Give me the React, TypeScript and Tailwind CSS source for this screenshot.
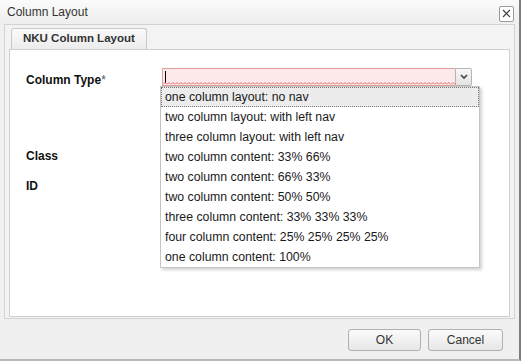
import React from "react";

const options = [
  "one column layout: no nav",
  "two column layout: with left nav",
  "three column layout: with left nav",
  "two column content: 33% 66%",
  "two column content: 66% 33%",
  "two column content: 50% 50%",
  "three column content: 33% 33% 33%",
  "four column content: 25% 25% 25% 25%",
  "one column content: 100%",
];

const font = { fontFamily: "Tahoma, 'Liberation Sans', Arial, sans-serif" };

export default function App() {
  return (
    <div
      className="w-[521px] h-[361px] flex flex-col bg-[#f0f0f0] border-r-[2px] border-b-[2px] border-r-[#7d7d7d] border-b-[#b9b9b9] text-[#222] overflow-hidden"
      style={font}
    >
      {/* title bar */}
      <div className="h-[23px] shrink-0 flex items-center justify-between pl-[7px] pr-[5px] bg-gradient-to-b from-[#fbfbfb] to-[#eeeeee]">
        <span className="text-[12px] text-[#333]">Column Layout</span>
        <button className="w-[15px] h-[16px] mt-[4px] flex items-center justify-center border border-[#9a9a9a] rounded-[2px] bg-white">
          <svg width="9" height="9" viewBox="0 0 9 9">
            <path d="M1 1 L8 8 M8 1 L1 8" stroke="#444" strokeWidth="1.2" />
          </svg>
        </button>
      </div>

      {/* panel */}
      <div className="mx-[4px] mt-[1px] border border-[#d3d3d3] bg-[#f3f3f3] px-[4px] pb-[1px] h-[295px] flex flex-col">
        <div className="flex pl-[2px] pt-[3px]">
          <div className="h-[21px] px-[11px] flex items-center border border-b-0 border-[#c9c9c9] rounded-t-[3px] bg-gradient-to-b from-[#fafafa] to-[#ececec] text-[11.5px] font-bold text-[#333]">
            NKU Column Layout
          </div>
        </div>
        <div className="relative flex-1 bg-white border border-[#cfcfcf] pt-[18px] pl-[16px]">
          <div className="flex flex-col text-[12px] font-bold text-[#111]">
            <div className="flex">
              <div className="w-[136px] pt-[3px]">
                Column Type<span className="font-normal text-[#555]">*</span>
              </div>
              <div className="flex h-[18px]">
                <div className="relative w-[293px] h-[18px] bg-[#fde9e9] border border-[#e0a0a0] border-r-0">
                  <div className="absolute left-[2px] top-[2px] w-px h-[12px] bg-black" />
                  <svg className="absolute left-0 bottom-0" width="293" height="3">
                    <defs>
                      <pattern id="wave" width="4" height="3" patternUnits="userSpaceOnUse">
                        <path d="M0 2.5 L2 0.5 L4 2.5" stroke="#d05050" strokeWidth="0.8" fill="none" />
                      </pattern>
                    </defs>
                    <rect width="293" height="3" fill="url(#wave)" />
                  </svg>
                </div>
                <div className="w-[17px] h-[18px] border border-[#b5b5b5] rounded-r-[2px] bg-gradient-to-b from-[#f8f8f8] to-[#e3e3e3] flex items-center justify-center">
                  <svg width="8" height="6" viewBox="0 0 8 6">
                    <path d="M1 1 L4 4 L7 1" stroke="#444" strokeWidth="1.6" fill="none" />
                  </svg>
                </div>
              </div>
            </div>
            <div className="mt-[58px]">Class</div>
            <div className="mt-[12px]">ID</div>
          </div>

          {/* dropdown list */}
          <div className="absolute left-[150px] top-[36px] w-[320px] bg-white border border-[#c4c4c4] shadow-[2px_2px_3px_rgba(0,0,0,0.18)] text-[12.3px] text-[#1a1a1a] font-normal">
            {options.map((o, i) => (
              <div
                key={o}
                className={
                  i === 0
                    ? "h-[20px] flex items-center pl-[3px] bg-[#ececec] border border-dotted border-[#777]"
                    : "h-[20px] flex items-center pl-[4px]"
                }
              >
                {o}
              </div>
            ))}
          </div>
        </div>
      </div>

      {/* footer */}
      <div className="flex-1 flex justify-end items-start gap-[7px] pr-[16px] pt-[10px]">
        <button className="w-[73px] h-[22px] text-[12px] text-[#333] border border-[#b0b0b0] rounded-[3px] bg-gradient-to-b from-[#fbfbfb] to-[#e6e6e6]">
          OK
        </button>
        <button className="w-[75px] h-[22px] text-[12px] text-[#333] border border-[#b0b0b0] rounded-[3px] bg-gradient-to-b from-[#fbfbfb] to-[#e6e6e6]">
          Cancel
        </button>
      </div>
    </div>
  );
}
